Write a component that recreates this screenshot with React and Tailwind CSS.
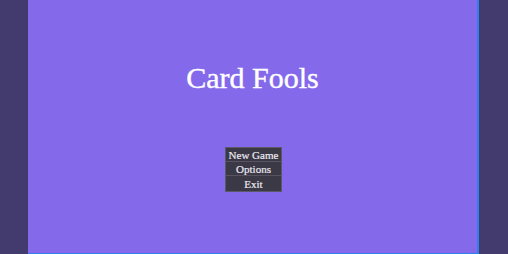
export default function App() {
    const items = ["New Game", "Options", "Exit"];
    return (
        <div className="flex h-[254px] w-[508px] bg-[#433a6d]">
            <div className="w-[28px] shrink-0" />
            <main className="flex w-[451px] shrink-0 flex-col items-center border-r-2 border-b border-[#2f80ed] bg-[#8469eb]">
                <h1 className="mt-[60px] font-['Liberation_Serif',serif] text-[30px] leading-[36px] text-white [-webkit-text-stroke:0.4px_white]">
                    Card Fools
                </h1>
                <div className="mt-[51px] ml-[2px] flex w-[57px] flex-col border border-[#5b5868] bg-[#3b3945]">
                    {items.map((label) => (
                        <button
                            key={label}
                            className="h-[14px] overflow-visible border-b border-[#57535f] pt-[1px] font-['Liberation_Serif',serif] text-[11px] leading-[13px] text-[#ece9f2] [-webkit-text-stroke:0.2px_#ece9f2] last:h-[15px] last:border-b-0"
                        >
                            {label}
                        </button>
                    ))}
                </div>
            </main>
            <div className="flex-1" />
        </div>
    );
}
